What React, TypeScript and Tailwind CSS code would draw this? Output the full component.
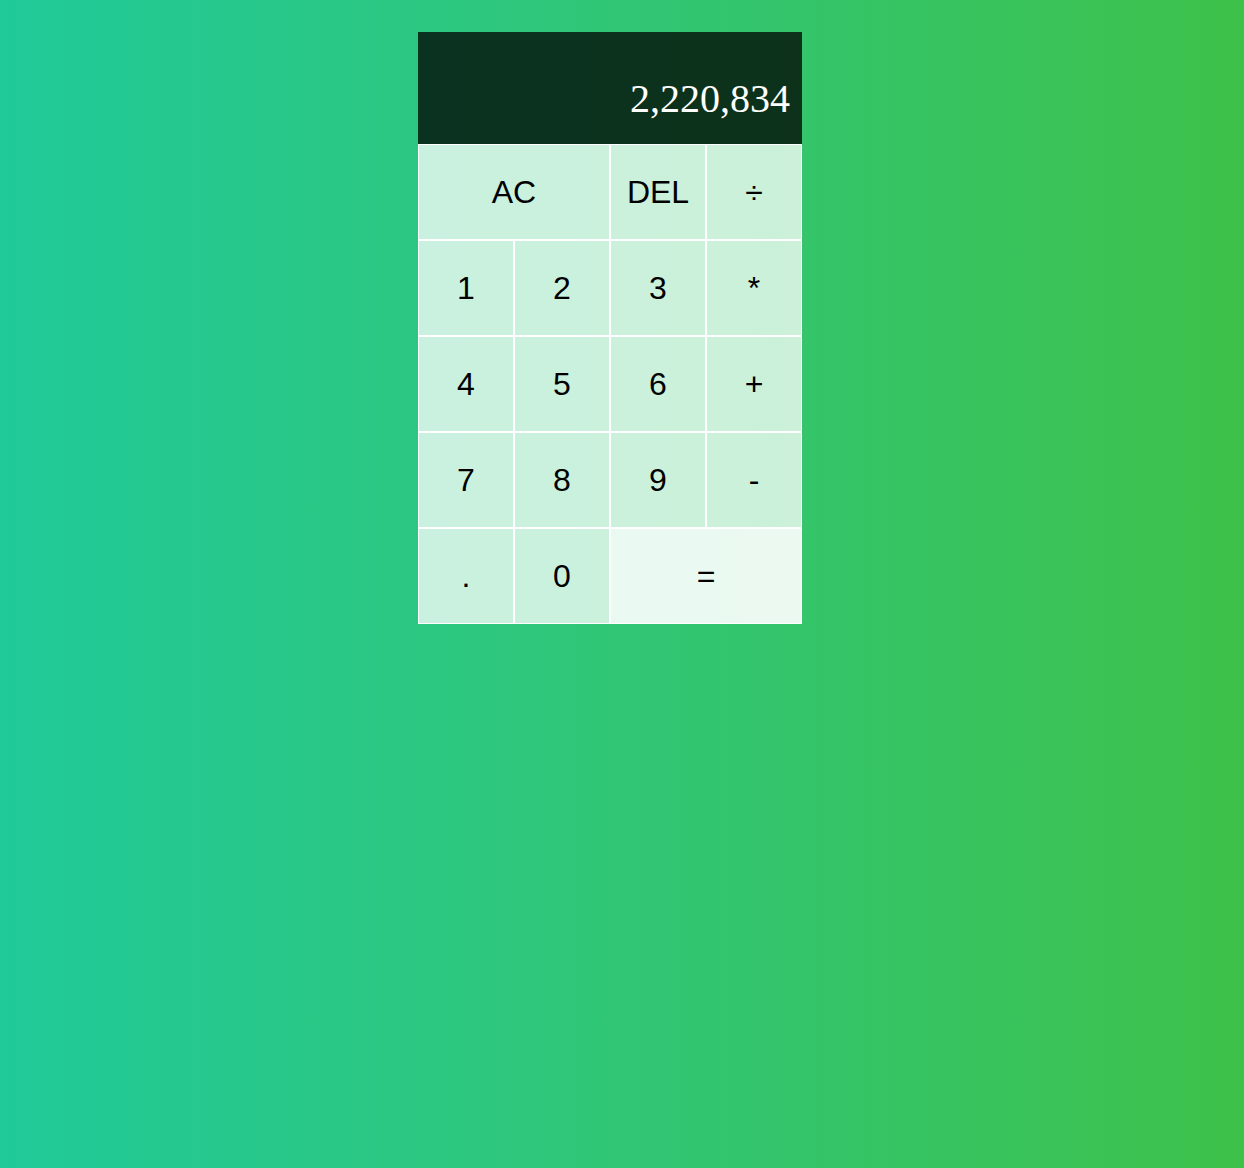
const Key = ({ label, wide = false, light = false }: { label: string; wide?: boolean; light?: boolean }) => (
  <button
    className={`border border-white text-[32px] text-black outline-none ${wide ? 'col-span-2' : ''} ${
      light ? 'bg-white/90' : 'bg-white/75'
    }`}
    style={{ fontFamily: '"Liberation Sans", Arial, sans-serif' }}
  >
    {label}
  </button>
);

const App = () => {
  return (
    <div className="min-h-[1168px] w-full bg-gradient-to-r from-[#20ca99] to-[#3dc149]">
      <div className="flex justify-center pr-[24px] pt-8">
        <div className="grid grid-cols-[repeat(4,96px)] grid-rows-[minmax(112px,auto)_repeat(5,96px)]">
          <div className="col-span-4 flex flex-col items-end justify-around break-all bg-black/75 p-3">
            <div className="text-2xl text-white/75"></div>
            <div
              className="text-[40px] leading-[normal] text-white"
              style={{ fontFamily: '"Liberation Serif", "Times New Roman", serif' }}
            >
              2,220,834
            </div>
          </div>
          <Key label="AC" wide />
          <Key label="DEL" />
          <Key label="÷" />
          <Key label="1" />
          <Key label="2" />
          <Key label="3" />
          <Key label="*" />
          <Key label="4" />
          <Key label="5" />
          <Key label="6" />
          <Key label="+" />
          <Key label="7" />
          <Key label="8" />
          <Key label="9" />
          <Key label="-" />
          <Key label="." />
          <Key label="0" />
          <Key label="=" wide light />
        </div>
      </div>
    </div>
  );
};

export default App;
